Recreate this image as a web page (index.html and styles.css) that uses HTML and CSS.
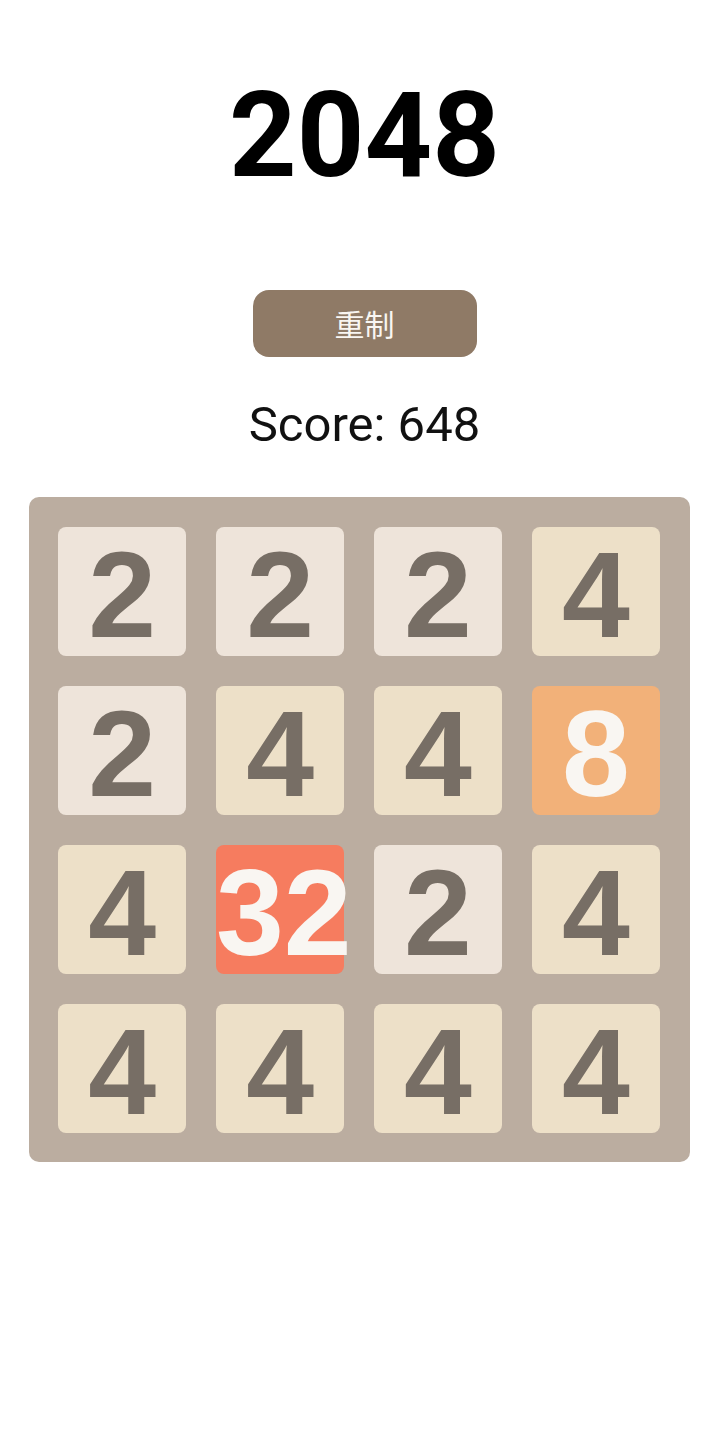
FILE: index.html
```html
<!DOCTYPE html>
<html lang="zh">
<head>
<meta charset="utf-8">
<title>2048</title>
<link rel="stylesheet" href="styles.css">
</head>
<body>
<main class="app">
  <header class="header">
    <h1 class="title">2048</h1>
    <button class="reset">重制</button>
    <div class="score">Score: 648</div>
  </header>
  <div class="board">
    <div class="tile t2">2</div>
    <div class="tile t2">2</div>
    <div class="tile t2">2</div>
    <div class="tile t4">4</div>
    <div class="tile t2">2</div>
    <div class="tile t4">4</div>
    <div class="tile t4">4</div>
    <div class="tile t8">8</div>
    <div class="tile t4">4</div>
    <div class="tile t32">32</div>
    <div class="tile t2">2</div>
    <div class="tile t4">4</div>
    <div class="tile t4">4</div>
    <div class="tile t4">4</div>
    <div class="tile t4">4</div>
    <div class="tile t4">4</div>
  </div>
</main>
</body>
</html>
```

FILE: styles.css
```css
html, body {
  margin: 0;
  padding: 0;
  background: #ffffff;
}

.app {
  display: flex;
  flex-direction: column;
  align-items: center;
  min-height: 1431px;
}

.header {
  display: flex;
  flex-direction: column;
  align-items: center;
  align-self: stretch;
  padding-left: 11px;
}

.title {
  margin: 76.5px 0 0 0;
  font-family: Roboto, "Liberation Sans", sans-serif;
  font-weight: 700;
  font-size: 118px;
  line-height: 118px;
  color: #000000;
}

.reset {
  margin-top: 95.5px;
  width: 224px;
  height: 67px;
  border: none;
  border-radius: 16px;
  background: #8f7a66;
  color: #f9f6f2;
  font-family: "Noto Sans CJK SC", sans-serif;
  font-size: 30px;
  line-height: 67px;
  padding: 0;
}

.score {
  margin-top: 38.5px;
  font-family: Roboto, "Liberation Sans", sans-serif;
  font-size: 49px;
  line-height: 57px;
  color: #111111;
}

.board {
  margin-top: 44.5px;
  width: 661px;
  box-sizing: border-box;
  padding: 29.5px;
  background: #bbada0;
  border-radius: 10px;
  display: grid;
  grid-template-columns: repeat(4, minmax(0, 1fr));
  grid-template-rows: repeat(4, 129px);
  column-gap: 29.5px;
  row-gap: 30px;
}

.tile {
  border-radius: 8px;
  text-align: center;
  font-family: "Liberation Sans", Arial, sans-serif;
  font-weight: 700;
  font-size: 122px;
  line-height: 137px;
  height: 129px;
  white-space: nowrap;
  color: #776e65;
}

.t2 { background: #eee4da; }
.t4 { background: #ede0c8; }
.t8 { background: #f2b179; color: #f9f6f2; }
.t32 { background: #f67c5f; color: #f9f6f2; }
```
